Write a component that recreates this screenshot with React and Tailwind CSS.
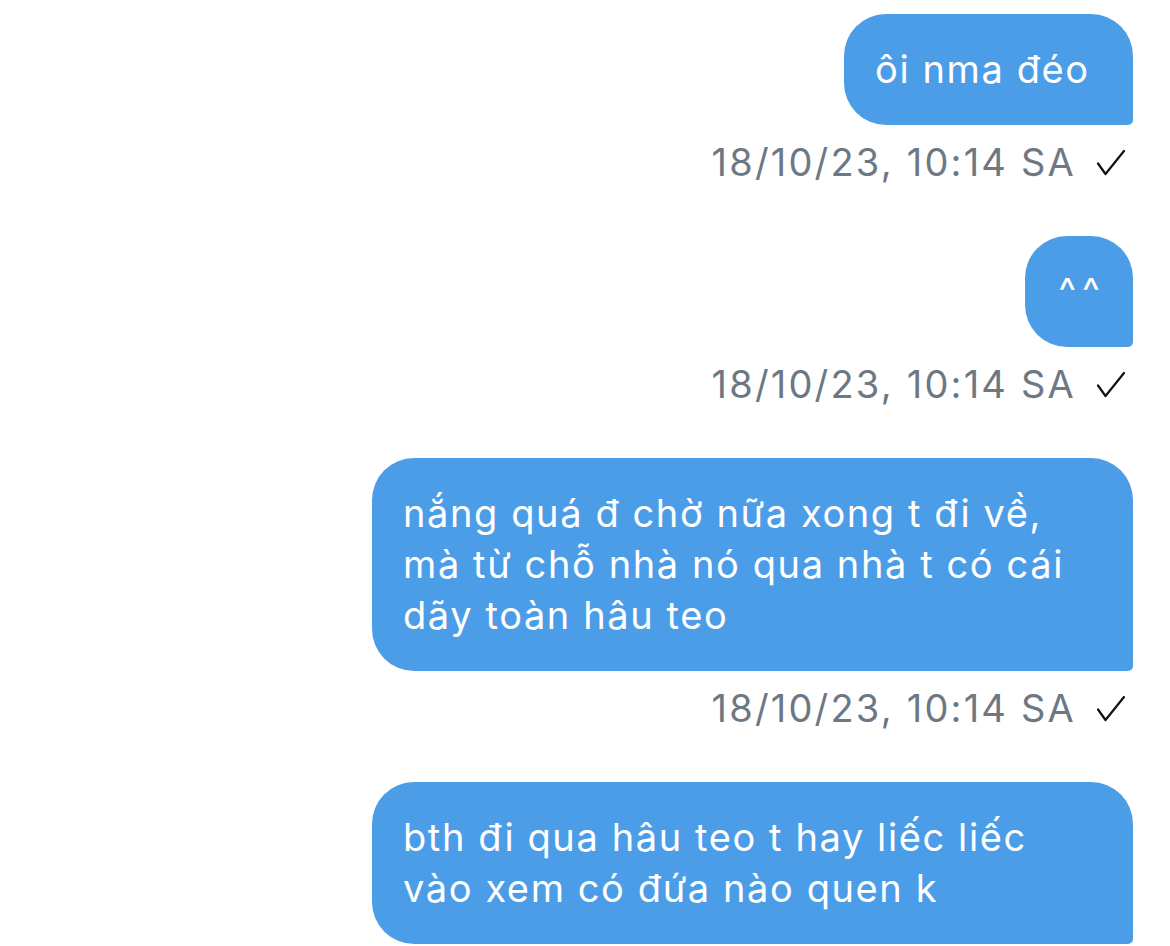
import React from "react";

const messages = [
  { id: 1, text: "ôi nma đéo\u00a0", time: "18/10/23, 10:14 SA" },
  { id: 2, text: "^^", time: "18/10/23, 10:14 SA", wide: true },
  { id: 3, text: "nắng quá đ chờ nữa xong t đi về, mà từ chỗ nhà nó qua nhà t có cái dãy toàn hâu teo", time: "18/10/23, 10:14 SA" },
  { id: 4, text: "bth đi qua hâu teo t hay liếc liếc vào xem có đứa nào quen k", time: null },
];

const Check = () => (
  <svg width="30" height="28" viewBox="0 0 30 28" fill="none">
    <path d="M2 14.5 L9.5 25 L28 2" stroke="#111" strokeWidth="2.2" strokeLinecap="round" strokeLinejoin="round" />
  </svg>
);

const App = () => {
  return (
    <div
      className="h-screen bg-white pt-[14px] pr-[37px] flex flex-col items-end gap-[48px] overflow-hidden"
      style={{ fontFamily: "Inter, 'Noto Sans', sans-serif" }}
    >
      {messages.map((m) => (
        <div key={m.id} className="flex flex-col items-end w-full shrink-0">
          <div
            className={
              "max-w-[761px] bg-[#4c9de8] text-white text-[38px] leading-[51px] py-[30px] rounded-[42px] rounded-br-[5px] " +
              (m.wide ? "pl-[33px] pr-[27px] tracking-[6px]" : "px-[31px] tracking-[1.6px]")
            }
          >
            {m.text}
          </div>
          {m.time && (
            <div className="mt-[12px] h-[51px] flex items-center gap-[20px] pr-[7px] text-[38px] text-[#6d7885] tracking-[2.2px]">
              <span>{m.time}</span>
              <Check />
            </div>
          )}
        </div>
      ))}
    </div>
  );
};

export default App;
